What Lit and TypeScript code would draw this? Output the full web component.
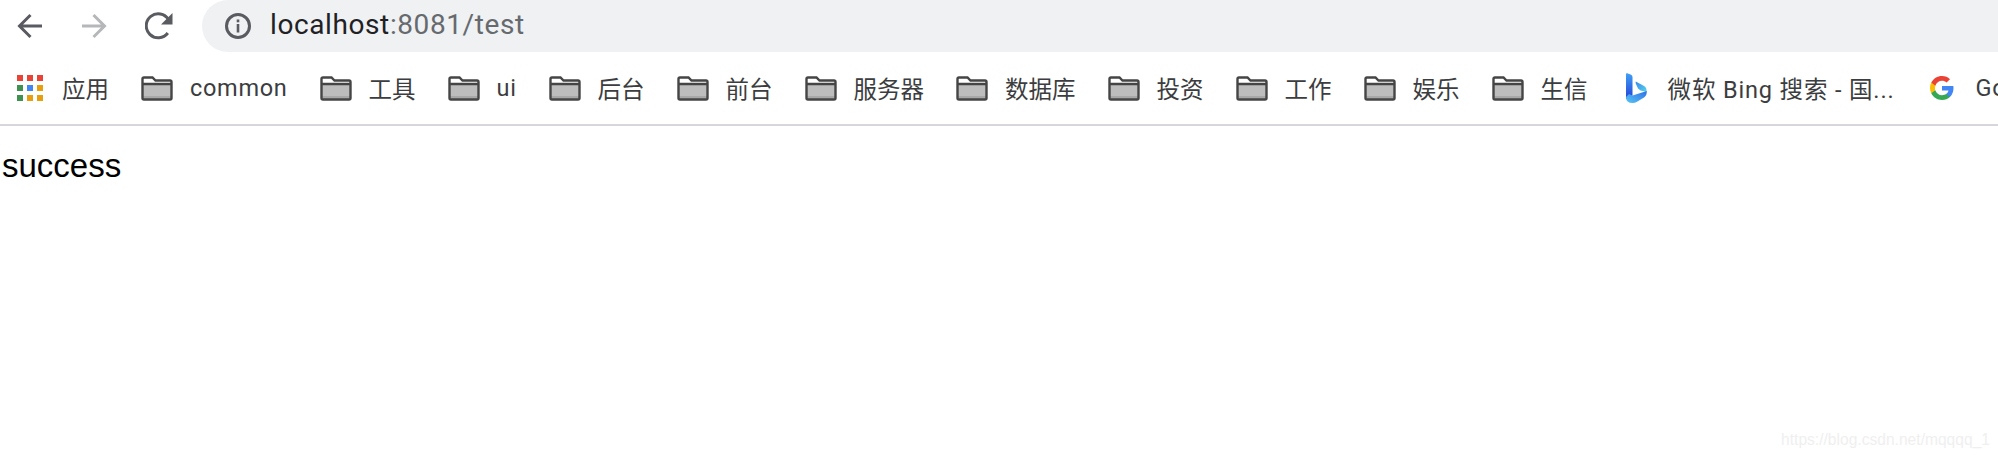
import { LitElement, html, css, svg } from "lit";
import { customElement } from "lit/decorators.js";

const folder = html`<svg class="folder" viewBox="0 0 32 25" width="32" height="25">
  <path d="M1.5 3 Q1.500 1.500 3 1.500 H11.500 L14.500 4.500 H29 Q30.500 4.500 30.500 6 V22 Q30.500 23.500 29 23.500 H3 Q1.500 23.500 1.500 22 Z" fill="#fff"/>
  <rect x="2" y="8" width="28" height="12" fill="#bdbdbd"/>
  <rect x="2" y="20" width="28" height="3" fill="#a8a8a8"/>
  <path d="M1.5 3 Q1.500 1.500 3 1.500 H11.500 L14.500 4.500 H29 Q30.500 4.500 30.500 6 V22 Q30.500 23.500 29 23.500 H3 Q1.500 23.500 1.500 22 Z M2 8 H30" fill="none" stroke="#454545" stroke-width="2.400"/>
</svg>`;

const squares: [number, number, string][] = [
  [0, 0, "#ea4335"], [10, 0, "#ea4335"], [20, 0, "#ea4335"],
  [0, 10, "#3f9150"], [10, 10, "#4285f4"], [20, 10, "#e89f0f"],
  [0, 20, "#3f9150"], [10, 20, "#e89f0f"], [20, 20, "#e89f0f"],
];

const apps = html`<svg class="apps" viewBox="0 0 26 26" width="26" height="26">
  ${squares.map(([x, y, c]) => svg`<rect x=${x} y=${y} width="6" height="6" fill=${c}/>`)}
</svg>`;

const bing = html`<svg class="favicon" viewBox="0 0 21 30" width="21" height="30">
  <defs>
    <linearGradient id="b1" x1="0" y1="0" x2="0" y2="1"><stop offset="0" stop-color="#3fa0f5"/><stop offset="1" stop-color="#2440d8"/></linearGradient>
    <linearGradient id="b2" x1="0" y1="0" x2="1" y2="1"><stop offset="0" stop-color="#3b86f0"/><stop offset="1" stop-color="#54d5ea"/></linearGradient>
    <linearGradient id="b3" x1="0" y1="1" x2="1" y2="0"><stop offset="0" stop-color="#58c6f2"/><stop offset="1" stop-color="#2f6fe8"/></linearGradient>
  </defs>
  <path d="M0 1 Q0 0 1.200 .3 L4.600 1.500 Q6.500 2.200 6.500 4 V22.500 L0 26 Z" fill="url(#b1)"/>
  <path d="M9.800 8.600 Q9.200 10 10.200 11.500 L12 15.500 L14.500 17.500 L20.500 19 Q21 14.500 18 13 Z" fill="url(#b2)"/>
  <path d="M0 24 Q0 30 6.500 30 Q9 30 11 28.800 L18 24.500 Q21 22.500 20.800 18 L6.500 22.500 L3 21 Z" fill="url(#b3)"/>
</svg>`;

const google = html`<svg class="favicon" viewBox="0 0 24 24" width="24" height="24">
  <path d="M23.500 12.300c0-.9-.1-1.700-.2-2.400H12v4.500h6.500c-.3 1.500-1.100 2.700-2.400 3.500v3h3.800c2.300-2 3.600-5.100 3.600-8.600z" fill="#4285f4"/>
  <path d="M12 24c3.200 0 6-1.100 7.900-2.900l-3.800-3c-1 .7-2.400 1.100-4.100 1.100-3.100 0-5.800-2.100-6.700-5H1.300v3.100C3.300 21.300 7.300 24 12 24z" fill="#34a853"/>
  <path d="M5.300 14.200c-.5-1.500-.5-3 0-4.500V6.600H1.300c-1.700 3.300-1.700 7.400 0 10.700z" fill="#fbbc05"/>
  <path d="M12 4.800c1.800 0 3.300.6 4.600 1.800l3.400-3.400C17.900 1.200 15.200 0 12 0 7.300 0 3.300 2.700 1.300 6.600l4 3.100c.9-2.800 3.600-4.900 6.700-4.900z" fill="#ea4335"/>
</svg>`;

const names = ["common", "工具", "ui", "后台", "前台", "服务器", "数据库", "投资", "工作", "娱乐", "生信"];

@customElement("app-root")
export class AppRoot extends LitElement {
  static styles = css`
    :host {
      display: flex;
      flex-direction: column;
      height: 456px;
      overflow: hidden;
      background: #fff;
      font-family: "Liberation Sans", "Noto Sans CJK SC", sans-serif;
    }
    .toolbar {
      display: flex;
      align-items: center;
      height: 52px;
      flex: none;
    }
    .nav {
      width: 26px;
      height: 26px;
      flex: none;
      margin-left: 17px;
    }
    .nav.fwd { margin-left: 38px; }
    .nav.reload { margin-left: 38px; width: 28px; height: 28px; margin-right: 29px; }
    .nav.info { margin: 0; }
    .omnibox {
      flex: 1;
      height: 52px;
      display: flex;
      align-items: center;
      background: #eff1f3;
      border-radius: 26px 0 0 26px;
      padding-left: 23px;
      gap: 19px;
    }
    .url {
      font-family: Roboto, "Liberation Sans", sans-serif;
      font-size: 28px;
      line-height: 30px;
      padding-bottom: 3px;
      letter-spacing: 0.6px;
      color: #666a6e;
      white-space: nowrap;
    }
    .url b { font-weight: 400; color: #1f2124; }
    .bookmarks {
      display: flex;
      align-items: center;
      height: 72px;
      flex: none;
      overflow: hidden;
      white-space: nowrap;
      border-bottom: 2px solid #d6d6db;
      font-family: Roboto, "Noto Sans CJK SC", sans-serif;
      font-size: 23.5px;
      color: #3c3d40;
      padding-left: 17px;
    }
    .item {
      display: flex;
      align-items: center;
      gap: 17px;
      flex: none;
      margin-right: 32px;
    }
    .item.latin { letter-spacing: 0.7px; }
    .item.apps-item { gap: 19px; margin-right: 32px; }
    .item.bing { gap: 21px; margin-left: 6px; margin-right: 36px; letter-spacing: 0.85px; }
    .item.google { gap: 21px; margin-right: 0; letter-spacing: 0.7px; }
    .folder, .apps, .favicon { flex: none; display: block; }
    .page {
      flex: 1;
      display: flex;
      flex-direction: column;
      padding: 21px 8px 5px 2px;
    }
    .message {
      font-size: 33px;
      line-height: 37px;
      color: #000;
    }
    .mark {
      margin-top: auto;
      text-align: right;
      font-size: 15.6px;
      line-height: 22px;
      color: #efefef;
    }
  `;

  render() {
    return html`
      <div class="toolbar">
        <svg class="nav" viewBox="0 0 26 26"><path d="M25 13H3M13.500 2 2.500 13l11 11" fill="none" stroke="#595b60" stroke-width="3"/></svg>
        <svg class="nav fwd" viewBox="0 0 26 26"><path d="M1 13h22M12.500 2l11 11-11 11" fill="none" stroke="#b6b7b9" stroke-width="3"/></svg>
        <svg class="nav reload" viewBox="0 0 28 28"><path d="M22.800 21A12 12 0 1 1 23.500 7.500" fill="none" stroke="#595b60" stroke-width="3"/><path d="M27.500 1V12.500H16Z" fill="#595b60"/></svg>
        <div class="omnibox">
          <svg class="nav info" viewBox="0 0 26 26"><circle cx="13" cy="13" r="11.500" fill="none" stroke="#595b60" stroke-width="3"/><rect x="11.700" y="6.500" width="2.600" height="2.800" fill="#595b60"/><rect x="11.700" y="11" width="2.600" height="8.500" fill="#595b60"/></svg>
          <div class="url"><b>localhost</b>:8081/test</div>
        </div>
      </div>
      <div class="bookmarks">
        <div class="item apps-item">${apps}<span>应用</span></div>
        ${names.map((n) => html`<div class="item ${n === "common" || n === "ui" ? "latin" : ""}">${folder}<span>${n}</span></div>`)}
        <div class="item bing">${bing}<span>微软 Bing 搜索 - 国...</span></div>
        <div class="item google">${google}<span>Google</span></div>
      </div>
      <div class="page">
        <div class="message">success</div>
        <div class="mark">https://blog.csdn.net/mqqqq_1</div>
      </div>
    `;
  }
}
